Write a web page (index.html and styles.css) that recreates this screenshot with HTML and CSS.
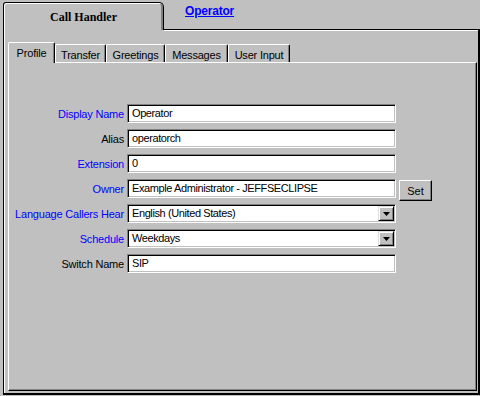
FILE: index.html
```html
<!DOCTYPE html>
<html lang="en">
<head>
  <meta charset="UTF-8" />
  <title>Call Handler - Operator</title>
  <link rel="stylesheet" href="styles.css">
</head>
<body>
  <div class="window">
    <div class="header">
      <div class="main-tab">Call Handler</div>
      <div class="header-line"><a href="#" class="link">Operator</a></div>
    </div>

    <div class="frame">
      <div class="subtabs">
        <div class="subtab active w-profile">Profile</div>
        <div class="subtab w-transfer">Transfer</div>
        <div class="subtab w-greetings">Greetings</div>
        <div class="subtab w-messages">Messages</div>
        <div class="subtab w-input">User Input</div>
      </div>

      <div class="panel">
        <div class="form">
          <label class="lbl blue">Display Name</label>
          <div class="field"><span>Operator</span></div>
          <div></div>

          <label class="lbl">Alias</label>
          <div class="field"><span>operatorch</span></div>
          <div></div>

          <label class="lbl blue">Extension</label>
          <div class="field"><span>0</span></div>
          <div></div>

          <label class="lbl blue">Owner</label>
          <div class="field"><span>Example Administrator - JEFFSECLIPSE</span></div>
          <button class="btn">Set</button>

          <label class="lbl blue">Language Callers Hear</label>
          <div class="field select">
            <span>English (United States)</span>
            <div class="arrow"><svg width="7" height="4" viewBox="0 0 7 4"><polygon points="0,0 7,0 3.5,4" fill="#000"/></svg></div>
          </div>
          <div></div>

          <label class="lbl blue">Schedule</label>
          <div class="field select">
            <span>Weekdays</span>
            <div class="arrow"><svg width="7" height="4" viewBox="0 0 7 4"><polygon points="0,0 7,0 3.5,4" fill="#000"/></svg></div>
          </div>
          <div></div>

          <label class="lbl">Switch Name</label>
          <div class="field"><span>SIP</span></div>
          <div></div>
        </div>
      </div>
    </div>
  </div>
</body>
</html>
```

FILE: styles.css
```css
* { margin: 0; padding: 0; box-sizing: border-box; }
body {
  background: #c0c0c0;
  font-family: "Liberation Sans", Arial, sans-serif;
  font-size: 11px;
  color: #000;
  overflow: hidden;
}
.window {
  width: 480px;
  height: 396px;
  padding: 2px 0 1px 3px;
  display: flex;
  flex-direction: column;
}
.header {
  display: flex;
  height: 28px;
  flex-shrink: 0;
}
.main-tab {
  width: 161px;
  border-top: 1px solid #000;
  border-left: 1px solid #000;
  border-right: 1px solid #000;
  border-radius: 3px 5px 0 0;
  box-shadow: inset 1px 1px 0 #fff, inset -2px 0 0 #808080;
  font-family: "Liberation Serif", "Times New Roman", serif;
  font-weight: bold;
  font-size: 12px;
  display: flex;
  align-items: center;
  justify-content: center;
  padding-top: 2px;
}
.header-line {
  flex: 1;
  border-bottom: 1px solid #000;
  box-shadow: 0 1px 0 #fff;
  padding: 2px 0 0 21px;
}
.link {
  color: #0000ff;
  font-weight: bold;
  font-size: 12px;
  text-decoration: underline;
  letter-spacing: -0.2px;
}
.frame {
  flex: 1;
  display: flex;
  flex-direction: column;
  border-left: 1px solid #000;
  border-right: 2px solid #000;
  border-bottom: 2px solid #000;
  box-shadow: inset 1px 0 0 #fff;
  padding: 0 1px 2px 4px;
}
.subtabs {
  height: 32px;
  flex-shrink: 0;
  display: flex;
  align-items: flex-end;
}
.subtab {
  height: 18px;
  padding-top: 2px;
  border-top: 1px solid #fff;
  border-left: 1px solid #fff;
  border-right: 1px solid #000;
  border-radius: 2px 2px 0 0;
  box-shadow: inset -1px 0 0 #808080;
  display: flex;
  align-items: center;
  justify-content: center;
  letter-spacing: -0.2px;
}
.subtab.active {
  height: 21px;
  padding-top: 0;
  margin-bottom: -1px;
  position: relative;
  z-index: 1;
  background: #c0c0c0;
}
.w-profile { width: 47px; }
.w-transfer { width: 51px; }
.w-greetings { width: 59px; }
.w-messages { width: 63px; }
.w-input { width: 62px; }
.panel {
  flex: 1;
  border-top: 1px solid #fff;
  border-left: 1px solid #fff;
  border-right: 1px solid #000;
  border-bottom: 1px solid #000;
  box-shadow: inset -1px -1px 0 #808080;
  padding-top: 41px;
}
.form {
  display: grid;
  grid-template-columns: 115px 269px auto;
  column-gap: 3px;
  row-gap: 6px;
  align-items: center;
}
.lbl {
  text-align: right;
  letter-spacing: -0.2px;
  white-space: nowrap;
}
.blue { color: #0000ff; }
.field {
  height: 19px;
  background: #fff;
  border: 1px solid;
  border-color: #808080 #fff #fff #808080;
  box-shadow: inset 1px 1px 0 #000, inset -1px -1px 0 #c0c0c0;
  padding: 1px;
  display: flex;
  align-items: center;
  letter-spacing: -0.4px;
  white-space: nowrap;
  overflow: hidden;
}
.field span {
  flex: 1;
  padding-left: 3px;
  line-height: 15px;
}
.arrow {
  width: 16px;
  height: 15px;
  background: #c0c0c0;
  border: 1px solid;
  border-color: #dfdfdf #000 #000 #dfdfdf;
  box-shadow: inset 1px 1px 0 #fff, inset -1px -1px 0 #808080;
  display: flex;
  align-items: center;
  justify-content: center;
}
.btn {
  justify-self: start;
  align-self: start;
  margin: 1px 0 -3px 0;
  width: 33px;
  height: 21px;
  background: #c0c0c0;
  font-family: "Liberation Sans", Arial, sans-serif;
  font-size: 11px;
  border: 1px solid;
  border-color: #fff #000 #000 #fff;
  box-shadow: inset -1px -1px 0 #808080;
}
```
